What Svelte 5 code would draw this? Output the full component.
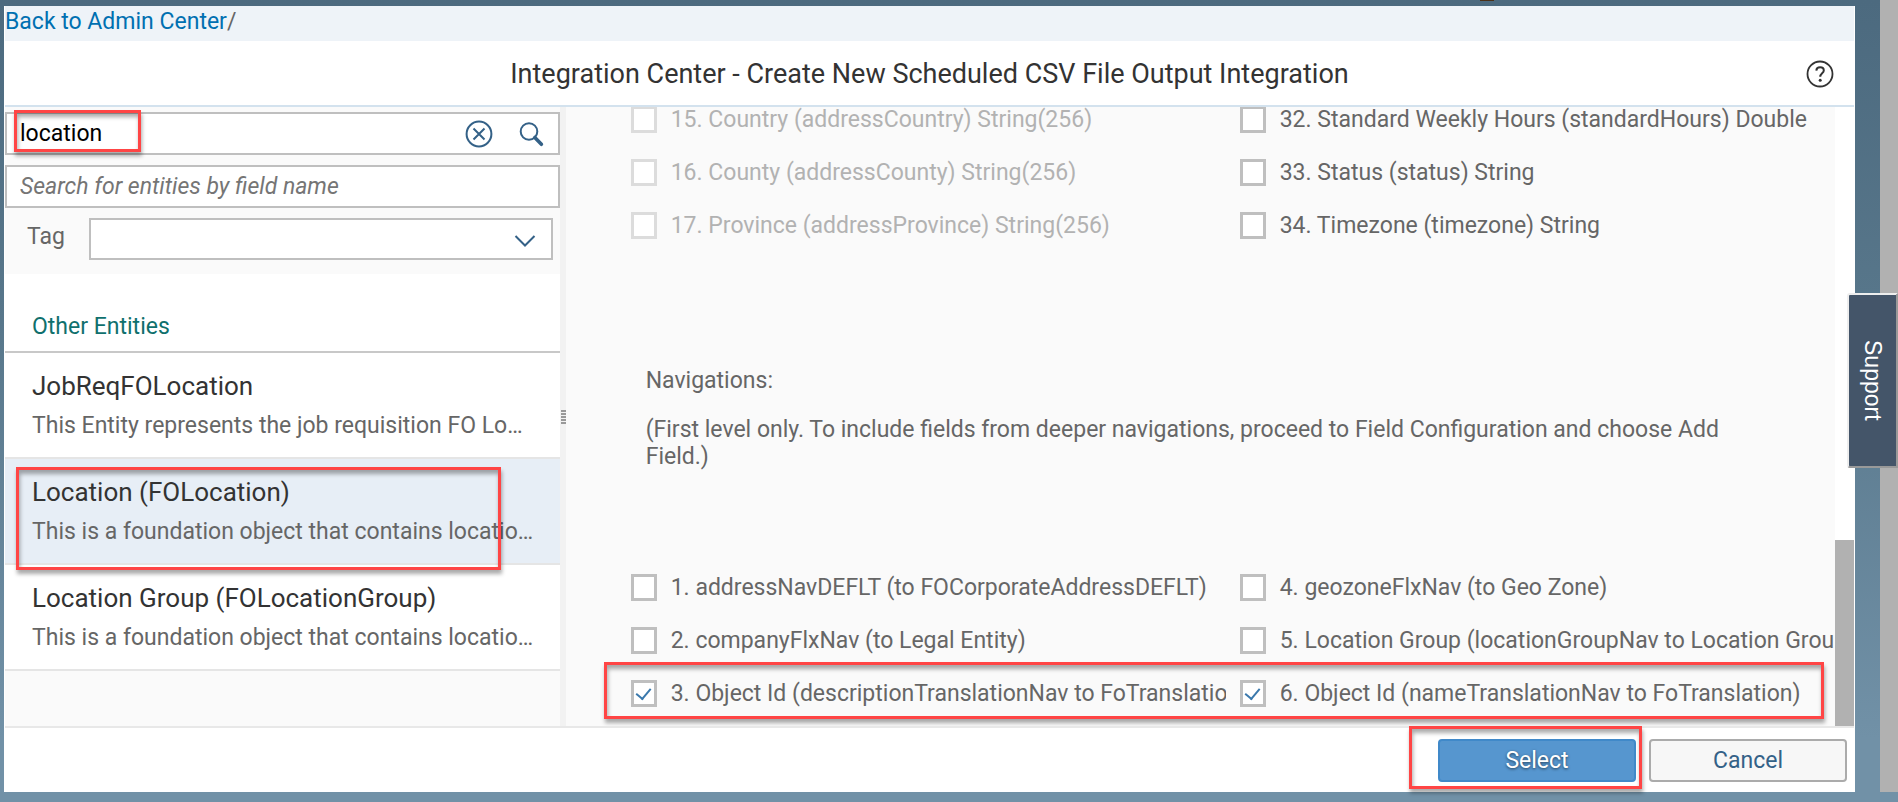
<script>
  const entities = [
    { name: 'JobReqFOLocation', text: 'This Entity represents the job requisition FO Lo…' },
    { name: 'Location (FOLocation)', text: 'This is a foundation object that contains locatio…', selected: true },
    { name: 'Location Group (FOLocationGroup)', text: 'This is a foundation object that contains locatio…' }
  ];

  const fields = [
    { label: '15. Country (addressCountry) String(256)', disabled: true },
    { label: '32. Standard Weekly Hours (standardHours) Double' },
    { label: '16. County (addressCounty) String(256)', disabled: true },
    { label: '33. Status (status) String' },
    { label: '17. Province (addressProvince) String(256)', disabled: true },
    { label: '34. Timezone (timezone) String' }
  ];

  const navigations = [
    { label: '1. addressNavDEFLT (to FOCorporateAddressDEFLT)' },
    { label: '4. geozoneFlxNav (to Geo Zone)' },
    { label: '2. companyFlxNav (to Legal Entity)' },
    { label: '5. Location Group (locationGroupNav to Location Group)' },
    { label: '3. Object Id (descriptionTranslationNav to FoTranslation)', checked: true },
    { label: '6. Object Id (nameTranslationNav to FoTranslation)', checked: true }
  ];

  let query = $state('location');
</script>

{#snippet options(list)}
  {#each list as item}
    <label class="option" class:disabled={item.disabled}>
      <input type="checkbox" checked={item.checked} disabled={item.disabled} />
      <span>{item.label}</span>
    </label>
  {/each}
{/snippet}

<div class="page">
  <i class="speck"></i>
  <main class="dialog">
    <nav class="crumbs"><a href="#admin">Back to Admin Center</a>/</nav>

    <header>
      <h1>Integration Center - Create New Scheduled CSV File Output Integration</h1>
      <button class="icon help" aria-label="Help">
        <svg width="28" height="28" viewBox="0 0 28 28" fill="none" stroke="#333" stroke-width="2">
          <circle cx="14" cy="14" r="12.5" stroke-width="1.8" />
          <path d="M10.3 10.6C10.5 8.5 12 7.3 14.1 7.3c2.2 0 3.7 1.3 3.7 3.2 0 2.7-3.6 3-3.6 6.3" />
          <circle cx="14.2" cy="20.2" r="1.5" fill="#333" stroke="none" />
        </svg>
      </button>
    </header>

    <div class="body">
      <aside>
        <div class="filters">
          <div class="field">
            <input type="text" aria-label="Search entities" bind:value={query} />
            <button class="icon" aria-label="Clear" onclick={() => (query = '')}>
              <svg width="28" height="28" viewBox="0 0 28 28" fill="none" stroke="#346187" stroke-width="2">
                <circle cx="14" cy="14" r="12.4" />
                <path d="M8.5 8.5l11 11M19.5 8.5l-11 11" />
              </svg>
            </button>
            <button class="icon" aria-label="Search">
              <svg width="28" height="28" viewBox="0 0 28 28" fill="none" stroke="#346187">
                <circle cx="12" cy="11.5" r="8.3" stroke-width="2" />
                <path d="M17.8 17.5l6.6 6.8" stroke-width="3.6" stroke-linecap="round" />
              </svg>
            </button>
            <div class="mark mark-query"></div>
          </div>
          <div class="field">
            <input type="text" aria-label="Search by field name" placeholder="Search for entities by field name" />
          </div>
          <div class="tag">
            <label for="tag">Tag</label>
            <div class="select">
              <select id="tag"><option></option></select>
              <svg width="22" height="12" viewBox="0 0 22 12" fill="none" stroke="#346187" stroke-width="2">
                <path d="M1.5 1L11 10.5 20.5 1" />
              </svg>
            </div>
          </div>
        </div>

        <h2>Other Entities</h2>
        <ul>
          {#each entities as entity}
            <li class:selected={entity.selected}>
              <h3>{entity.name}</h3>
              <p>{entity.text}</p>
              {#if entity.selected}<div class="mark mark-entity"></div>{/if}
            </li>
          {/each}
        </ul>
      </aside>

      <div class="splitter">
        <i></i><i></i><i></i><i></i><i></i>
      </div>

      <section>
        <div class="options">{@render options(fields)}</div>
        <div class="intro">
          <p>Navigations:</p>
          <p>(First level only. To include fields from deeper navigations, proceed to Field Configuration and choose Add Field.)</p>
        </div>
        <div class="options">
          {@render options(navigations)}
          <div class="mark mark-row"></div>
        </div>
      </section>

      <div class="track"><div class="thumb"></div></div>
    </div>

    <footer>
      <div class="primary">
        <button class="btn select-btn">Select</button>
        <div class="mark mark-select"></div>
      </div>
      <button class="btn">Cancel</button>
    </footer>
  </main>
  <div class="page-scroll"></div>
  <button class="support">Support</button>
</div>

<style>
  :global(body) {
    margin: 0;
  }
  .page,
  .page * {
    box-sizing: border-box;
  }
  .page {
    position: relative;
    display: flex;
    gap: 25px;
    height: 100vh;
    padding: 6px 0 10px 4px;
    overflow: hidden;
    background: linear-gradient(#4c6a7f, #58778b 40%, #7191a7 92%);
    font-family: Roboto, 'Noto Sans', sans-serif;
    font-size: 23px;
    line-height: 27px;
    color: #666;
  }
  .speck {
    position: absolute;
    top: -2px;
    left: 78%;
    width: 14px;
    height: 3px;
    background: #4a3018;
  }
  h1,
  h2,
  h3,
  p,
  ul {
    margin: 0;
    padding: 0;
    font-weight: 400;
  }
  button,
  input,
  select {
    font: inherit;
  }
  .dialog {
    flex: 1;
    min-width: 0;
    display: flex;
    flex-direction: column;
    padding: 0 1px;
    background: #fff;
  }
  .crumbs {
    height: 35px;
    padding: 2px 0;
    background: #eef3f8;
  }
  .crumbs a {
    color: #0070b1;
    text-decoration: none;
  }
  header {
    display: flex;
    align-items: center;
    height: 66px;
    padding: 2px 20px 0 48px;
    border-bottom: 2px solid #d3e2ee;
  }
  h1 {
    flex: 1;
    text-align: center;
    font-size: 27px;
    color: #333;
  }
  .icon {
    display: flex;
    padding: 0;
    border: 0;
    background: none;
  }
  .body {
    flex: 1;
    min-height: 0;
    display: flex;
    background: #fafafa;
    border-bottom: 2px solid #e8e8e8;
  }
  aside {
    width: 30%;
  }
  .filters {
    display: flex;
    flex-direction: column;
    gap: 10px;
    padding: 5px 0 14px;
  }
  .field {
    position: relative;
    display: flex;
    align-items: center;
    gap: 24px;
    height: 43px;
    padding: 0 13px;
    background: #fff;
    border: 2px solid #bfbfbf;
  }
  .field input {
    flex: 1;
    min-width: 0;
    padding: 0;
    border: 0;
    outline: 0;
    background: none;
    color: #000;
  }
  .field input::placeholder {
    color: #757575;
    font-style: italic;
  }
  .tag {
    display: flex;
    justify-content: space-between;
    padding: 0 7px 0 22px;
  }
  .tag label {
    padding-top: 5px;
  }
  .select {
    position: relative;
    width: 464px;
    height: 42px;
  }
  .select select {
    width: 100%;
    height: 100%;
    appearance: none;
    background: #fff;
    border: 2px solid #bfbfbf;
    border-radius: 0;
  }
  .select svg {
    position: absolute;
    right: 17px;
    top: 17px;
    pointer-events: none;
  }
  h2 {
    padding: 39px 27px 11px;
    background: #fff;
    border-bottom: 2px solid #c8c8c8;
    font-size: 23px;
    color: #0f706d;
  }
  ul {
    list-style: none;
  }
  li {
    position: relative;
    display: flex;
    flex-direction: column;
    gap: 12px;
    height: 106px;
    padding: 20px 27px;
    background: #fff;
    border-bottom: 2px solid #e5e5e5;
    white-space: nowrap;
  }
  li.selected {
    background: #e7eef6;
  }
  h3 {
    font-size: 26px;
    color: #333;
  }
  .splitter {
    display: flex;
    flex-direction: column;
    align-items: flex-end;
    justify-content: center;
    gap: 1px;
    width: 6px;
    background: #f2f2f2;
  }
  .splitter i {
    width: 5px;
    height: 2px;
    background: #999;
  }
  section {
    flex: 1;
    min-width: 0;
    display: flex;
    flex-direction: column;
    justify-content: flex-end;
    gap: 136px;
    padding: 0 0 19px 65px;
    overflow: hidden;
  }
  .options {
    position: relative;
    display: grid;
    grid-template-columns: 595px 1fr;
    column-gap: 14px;
    row-gap: 26px;
  }
  .option {
    display: flex;
    align-items: center;
    gap: 14px;
    min-width: 0;
    overflow: hidden;
    white-space: nowrap;
  }
  .option.disabled {
    color: #b2b2b2;
  }
  .option input {
    flex: none;
    display: grid;
    place-items: center;
    width: 26px;
    height: 27px;
    margin: 0;
    appearance: none;
    background: #fff;
    border: 3px solid #bfbfbf;
  }
  .option.disabled input {
    border-color: #dcdcdc;
  }
  .option input:checked::before {
    content: '';
    width: 7px;
    height: 12px;
    margin-bottom: 3px;
    border: solid #3a78ac;
    border-width: 0 2px 2px 0;
    transform: rotate(40deg);
  }
  .intro {
    display: flex;
    flex-direction: column;
    gap: 22px;
    padding: 0 80px 0 15px;
    margin: -8px 0 -32px;
  }
  .track {
    display: flex;
    align-items: flex-end;
    width: 19px;
    background: #fff;
  }
  .thumb {
    width: 100%;
    height: 30%;
    background: #b1b1b1;
  }
  footer {
    display: flex;
    align-items: center;
    justify-content: flex-end;
    gap: 13px;
    height: 64px;
    padding: 0 7px;
  }
  .primary {
    position: relative;
  }
  .btn {
    display: block;
    width: 198px;
    height: 43px;
    border: 2px solid #ababab;
    border-radius: 4px;
    background: #f7f7f7;
    color: #346187;
  }
  .select-btn {
    background: #5696cf;
    border-color: #4089c9;
    color: #fff;
    text-shadow: 0 1px 3px #0009;
  }
  .mark {
    position: absolute;
    z-index: 1;
    border: 3px solid #ff4545;
    box-shadow: 1px 4px 4px #0005, inset 1px 4px 4px #0005;
    pointer-events: none;
  }
  .mark-query {
    inset: -4px auto 1px 7px;
    width: 127px;
  }
  .mark-entity {
    inset: 8px 59px -7px 11px;
  }
  .mark-row {
    inset: auto 11px -12px -27px;
    height: 57px;
  }
  .mark-select {
    inset: -13px -6px -7px -29px;
  }
  .page-scroll {
    width: 18px;
    margin-top: -6px;
    background: #b1b1b1;
  }
  .support {
    position: absolute;
    top: 293px;
    right: 0;
    width: 51px;
    height: 175px;
    padding: 0;
    writing-mode: vertical-rl;
    background: #445569;
    border: 2px solid;
    border-color: #eee #999 #999 #eee;
    border-radius: 3px 0 0 3px;
    font-family: 'Liberation Sans', sans-serif;
    font-size: 23px;
    color: #fff;
  }
</style>
